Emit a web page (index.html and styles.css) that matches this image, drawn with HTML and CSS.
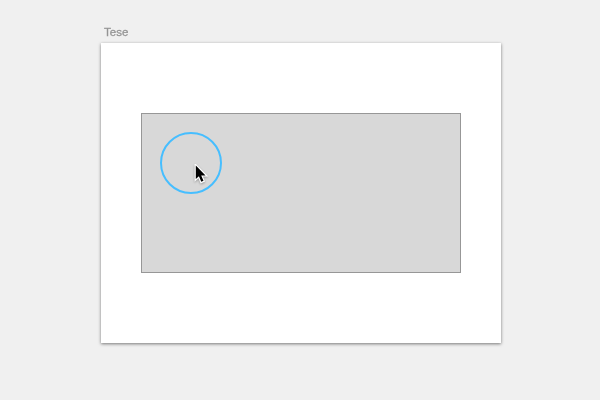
FILE: index.html
```html
<!DOCTYPE html>
<html lang="en">
<head>
<meta charset="utf-8">
<title>Tese</title>
<link rel="stylesheet" href="styles.css">
</head>
<body>
<main class="canvas">
  <div class="artboard-title">Tese</div>
  <section class="artboard">
    <div class="rectangle">
      <div class="circle"></div>
      <svg class="cursor" width="16" height="22" viewBox="0 0 16 22">
        <path d="M1.8 1.5V15L4.9 12.2L7.3 17.8L9.5 16.8L7.2 11.4H11.5Z" fill="#000" stroke="#fff" stroke-width="2.4" paint-order="stroke"/>
      </svg>
    </div>
  </section>
</main>
</body>
</html>
```

FILE: styles.css
```css
body {
  margin: 0;
  background: #f0f0f0;
  font-family: "Liberation Sans", Arial, sans-serif;
}

.canvas {
  box-sizing: border-box;
  width: 600px;
  height: 400px;
  padding: 25px 99px 0 101px;
  overflow: hidden;
}

.artboard-title {
  height: 18px;
  padding-left: 3px;
  box-sizing: border-box;
  color: #959595;
  font-size: 11.5px;
  line-height: 14px;
  -webkit-text-stroke: 0.3px #959595;
  will-change: transform;
}

.artboard {
  box-sizing: border-box;
  width: 400px;
  height: 300px;
  padding: 70px 40px;
  background: #fff;
  box-shadow: 0 1px 3px rgba(0, 0, 0, 0.5);
}

.rectangle {
  position: relative;
  box-sizing: border-box;
  width: 320px;
  height: 160px;
  padding: 18px;
  border: 1px solid #979797;
  background: #d8d8d8;
}

.circle {
  box-sizing: border-box;
  width: 62px;
  height: 62px;
  border: 2px solid #46beff;
  border-radius: 50%;
}

.cursor {
  position: absolute;
  left: 52px;
  top: 50px;
  filter: drop-shadow(0 1px 1px rgba(0, 0, 0, 0.3));
}
```
